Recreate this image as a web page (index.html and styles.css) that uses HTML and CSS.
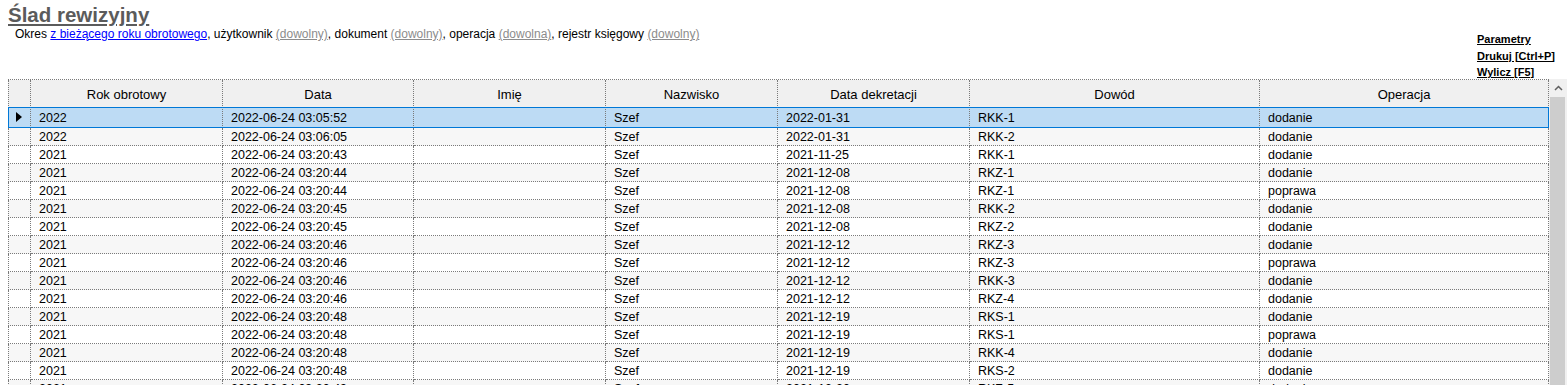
FILE: index.html
```html
<!DOCTYPE html>
<html lang="pl">
<head>
    <meta charset="UTF-8">
    <title>Ślad rewizyjny</title>
    <link rel="stylesheet" href="styles.css">
</head>
<body>
  <!-- Nagłówek z filtrem -->
  <div class="top">
    <div class="intro">
      <h1>Ślad rewizyjny</h1>
      <p class="filter">Okres <a href="#">z bieżącego roku obrotowego</a>, użytkownik <a class="any" href="#">(dowolny)</a>, dokument <a class="any" href="#">(dowolny)</a>, operacja <a class="any" href="#">(dowolna)</a>, rejestr księgowy <a class="any" href="#">(dowolny)</a></p>
    </div>
    <div class="actions">
      <a href="#">Parametry</a>
      <a href="#">Drukuj [Ctrl+P]</a>
      <a href="#">Wylicz [F5]</a>
    </div>
  </div>

  <!-- Siatka z danymi -->
  <div class="grid">
    <div class="table">
      <div class="row head">
        <div class="cell"></div>
        <div class="cell w1">Rok obrotowy</div>
        <div class="cell w2">Data</div>
        <div class="cell w3">Imię</div>
        <div class="cell w4">Nazwisko</div>
        <div class="cell w5">Data dekretacji</div>
        <div class="cell w6">Dowód</div>
        <div class="cell w7">Operacja</div>
      </div>
      <div class="rows">
        <div class="row sel">
          <div class="cell"><span class="pointer"></span></div>
          <div class="cell w1">2022</div><div class="cell w2">2022-06-24 03:05:52</div><div class="cell w3"></div>
          <div class="cell w4">Szef</div><div class="cell w5">2022-01-31</div><div class="cell w6">RKK-1</div><div class="cell w7">dodanie</div>
        </div>
        <div class="row">
          <div class="cell"></div>
          <div class="cell w1">2022</div><div class="cell w2">2022-06-24 03:06:05</div><div class="cell w3"></div>
          <div class="cell w4">Szef</div><div class="cell w5">2022-01-31</div><div class="cell w6">RKK-2</div><div class="cell w7">dodanie</div>
        </div>
        <div class="row">
          <div class="cell"></div>
          <div class="cell w1">2021</div><div class="cell w2">2022-06-24 03:20:43</div><div class="cell w3"></div>
          <div class="cell w4">Szef</div><div class="cell w5">2021-11-25</div><div class="cell w6">RKK-1</div><div class="cell w7">dodanie</div>
        </div>
        <div class="row">
          <div class="cell"></div>
          <div class="cell w1">2021</div><div class="cell w2">2022-06-24 03:20:44</div><div class="cell w3"></div>
          <div class="cell w4">Szef</div><div class="cell w5">2021-12-08</div><div class="cell w6">RKZ-1</div><div class="cell w7">dodanie</div>
        </div>
        <div class="row">
          <div class="cell"></div>
          <div class="cell w1">2021</div><div class="cell w2">2022-06-24 03:20:44</div><div class="cell w3"></div>
          <div class="cell w4">Szef</div><div class="cell w5">2021-12-08</div><div class="cell w6">RKZ-1</div><div class="cell w7">poprawa</div>
        </div>
        <div class="row">
          <div class="cell"></div>
          <div class="cell w1">2021</div><div class="cell w2">2022-06-24 03:20:45</div><div class="cell w3"></div>
          <div class="cell w4">Szef</div><div class="cell w5">2021-12-08</div><div class="cell w6">RKK-2</div><div class="cell w7">dodanie</div>
        </div>
        <div class="row">
          <div class="cell"></div>
          <div class="cell w1">2021</div><div class="cell w2">2022-06-24 03:20:45</div><div class="cell w3"></div>
          <div class="cell w4">Szef</div><div class="cell w5">2021-12-08</div><div class="cell w6">RKZ-2</div><div class="cell w7">dodanie</div>
        </div>
        <div class="row">
          <div class="cell"></div>
          <div class="cell w1">2021</div><div class="cell w2">2022-06-24 03:20:46</div><div class="cell w3"></div>
          <div class="cell w4">Szef</div><div class="cell w5">2021-12-12</div><div class="cell w6">RKZ-3</div><div class="cell w7">dodanie</div>
        </div>
        <div class="row">
          <div class="cell"></div>
          <div class="cell w1">2021</div><div class="cell w2">2022-06-24 03:20:46</div><div class="cell w3"></div>
          <div class="cell w4">Szef</div><div class="cell w5">2021-12-12</div><div class="cell w6">RKZ-3</div><div class="cell w7">poprawa</div>
        </div>
        <div class="row">
          <div class="cell"></div>
          <div class="cell w1">2021</div><div class="cell w2">2022-06-24 03:20:46</div><div class="cell w3"></div>
          <div class="cell w4">Szef</div><div class="cell w5">2021-12-12</div><div class="cell w6">RKK-3</div><div class="cell w7">dodanie</div>
        </div>
        <div class="row">
          <div class="cell"></div>
          <div class="cell w1">2021</div><div class="cell w2">2022-06-24 03:20:46</div><div class="cell w3"></div>
          <div class="cell w4">Szef</div><div class="cell w5">2021-12-12</div><div class="cell w6">RKZ-4</div><div class="cell w7">dodanie</div>
        </div>
        <div class="row">
          <div class="cell"></div>
          <div class="cell w1">2021</div><div class="cell w2">2022-06-24 03:20:48</div><div class="cell w3"></div>
          <div class="cell w4">Szef</div><div class="cell w5">2021-12-19</div><div class="cell w6">RKS-1</div><div class="cell w7">dodanie</div>
        </div>
        <div class="row">
          <div class="cell"></div>
          <div class="cell w1">2021</div><div class="cell w2">2022-06-24 03:20:48</div><div class="cell w3"></div>
          <div class="cell w4">Szef</div><div class="cell w5">2021-12-19</div><div class="cell w6">RKS-1</div><div class="cell w7">poprawa</div>
        </div>
        <div class="row">
          <div class="cell"></div>
          <div class="cell w1">2021</div><div class="cell w2">2022-06-24 03:20:48</div><div class="cell w3"></div>
          <div class="cell w4">Szef</div><div class="cell w5">2021-12-19</div><div class="cell w6">RKK-4</div><div class="cell w7">dodanie</div>
        </div>
        <div class="row">
          <div class="cell"></div>
          <div class="cell w1">2021</div><div class="cell w2">2022-06-24 03:20:48</div><div class="cell w3"></div>
          <div class="cell w4">Szef</div><div class="cell w5">2021-12-19</div><div class="cell w6">RKS-2</div><div class="cell w7">dodanie</div>
        </div>
        <div class="row">
          <div class="cell"></div>
          <div class="cell w1">2021</div><div class="cell w2">2022-06-24 03:20:49</div><div class="cell w3"></div>
          <div class="cell w4">Szef</div><div class="cell w5">2021-12-20</div><div class="cell w6">RKZ-5</div><div class="cell w7">dodanie</div>
        </div>
      </div>
    </div>

    <!-- Pasek przewijania -->
    <div class="scroll">
      <div class="scroll-up">
        <svg width="9" height="6" viewBox="0 0 9 6"><polyline points="1,5 4.5,1.5 8,5" fill="none" stroke="#606060" stroke-width="1.5"/></svg>
      </div>
      <div class="thumb"></div>
    </div>
  </div>
</body>
</html>
```

FILE: styles.css
```css
/* Основне оформлення */
body {
    margin: 0;
    height: 385px;
    overflow: hidden;
    background: #fff;
    font-family: "Liberation Sans", Arial, sans-serif;
    color: #000;
}

/* Nagłówek */
.top {
    display: flex;
    height: 79px;
}

.intro {
    flex: 1;
    padding-left: 8px;
}

.intro h1 {
    display: inline-block;
    margin: 3px 0 0;
    font-size: 20.5px;
    line-height: 24px;
    color: #5b5b5b;
    text-decoration: underline;
}

.filter {
    margin: 0;
    padding-left: 7px;
    font-size: 12px;
    line-height: 14px;
}

.filter a {
    color: #0000ff;
}

.filter a.any {
    color: #8c8c8c;
}

/* Linki akcji */
.actions {
    width: 90px;
    padding-top: 31px;
    display: flex;
    flex-direction: column;
    align-items: flex-start;
    font-size: 11px;
    font-weight: bold;
    line-height: 16.5px;
}

.actions a {
    color: #000;
}

/* Siatka */
.grid {
    display: flex;
    margin-left: 8px;
}

.table {
    width: 1541px;
    border-top: 1px dotted #7a7a7a;
}

.row {
    display: flex;
    height: 18px;
    background: #fff;
}

.rows .row:nth-child(even) {
    background: #f7f7f7;
}

.cell {
    box-sizing: border-box;
    width: 23px;
    flex-shrink: 0;
    border-right: 1px dotted #7a7a7a;
    border-bottom: 1px dotted #7a7a7a;
    padding: 2px 0 0 8px;
    font-size: 12.5px;
    line-height: 15px;
    white-space: nowrap;
}

.cell:first-child {
    border-left: 1px dotted #7a7a7a;
    padding-left: 0;
}

.w1 { width: 192px; }
.w2 { width: 191px; }
.w3 { width: 192px; }
.w4 { width: 172px; }
.w5 { width: 192px; }
.w6 { width: 290px; }
.w7 { width: 289px; }

.row.head {
    height: 28px;
    background: #f0f0f0;
}

.head .cell {
    padding: 3px 0 0;
    text-align: center;
    font-size: 13px;
    line-height: 23px;
}

/* Zaznaczony wiersz */
.rows .row.sel {
    position: relative;
    height: 21px;
    margin-top: -1px;
    background: #bddbf4;
    outline: 1px solid #0078d7;
    outline-offset: -1px;
}

.sel .cell {
    padding-top: 4px;
}

.pointer {
    display: block;
    width: 0;
    height: 0;
    margin: 1px 0 0 7px;
    border-left: 6px solid #000;
    border-top: 5px solid transparent;
    border-bottom: 5px solid transparent;
}

/* Pasek przewijania */
.scroll {
    width: 18px;
    height: 306px;
    background: #f0f0f0;
}

.scroll-up {
    height: 18px;
    display: flex;
    align-items: center;
    justify-content: center;
}

.thumb {
    width: 15px;
    height: 300px;
    margin-left: 1px;
    background: #cdcdcd;
}
```
